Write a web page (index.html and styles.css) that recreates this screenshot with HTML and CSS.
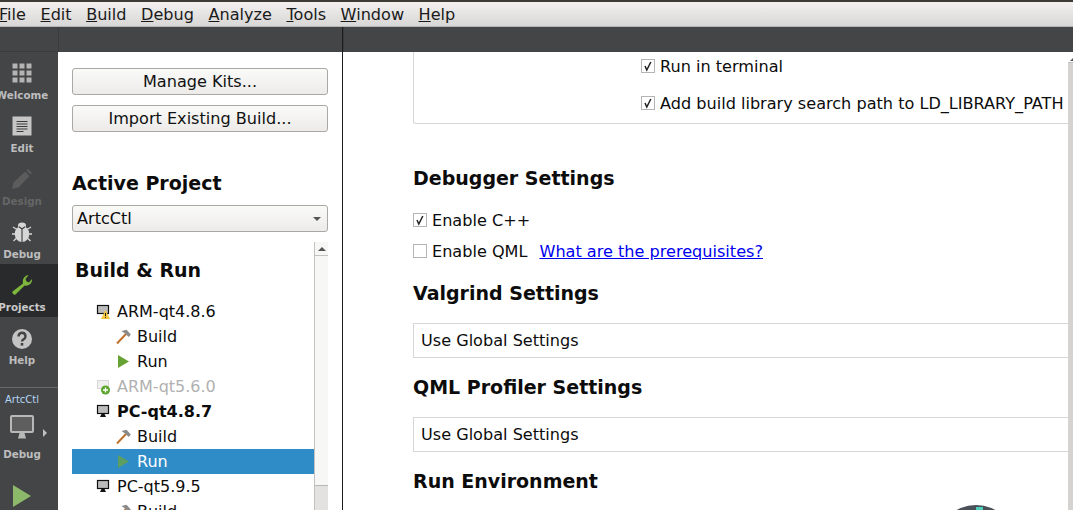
FILE: index.html
```html
<!DOCTYPE html>
<html lang="en">
<head>
<meta charset="utf-8">
<title>Qt Creator</title>
<link rel="stylesheet" href="styles.css">
</head>
<body>
<div class="app">
  <div class="titlestrip"></div>
  <nav class="menubar">
    <span class="menu file"><u>F</u>ile</span>
    <span class="menu"><u>E</u>dit</span>
    <span class="menu"><u>B</u>uild</span>
    <span class="menu"><u>D</u>ebug</span>
    <span class="menu"><u>A</u>nalyze</span>
    <span class="menu"><u>T</u>ools</span>
    <span class="menu"><u>W</u>indow</span>
    <span class="menu"><u>H</u>elp</span>
  </nav>
  <div class="main">
    <aside class="rail">
      <div class="rail-top"></div>
      <div class="mode">
        <svg class="mode-icon" width="20" height="20" viewBox="0 0 20 20"><g fill="#b4b4b4"><rect x="0.500" y="0.500" width="5" height="5"/><rect x="7.500" y="0.500" width="5" height="5"/><rect x="14.500" y="0.500" width="5" height="5"/><rect x="0.500" y="7.500" width="5" height="5"/><rect x="7.500" y="7.500" width="5" height="5"/><rect x="14.500" y="7.500" width="5" height="5"/><rect x="0.500" y="14.500" width="5" height="5"/><rect x="7.500" y="14.500" width="5" height="5"/><rect x="14.500" y="14.500" width="5" height="5"/></g></svg>
        <span class="mode-label">Welcome</span>
      </div>
      <div class="mode">
        <svg class="mode-icon" width="20" height="20" viewBox="0 0 20 20"><rect x="0.500" y="0.500" width="19" height="19" fill="#c6c6c6"/><path d="M4.500 5.500h11M4.500 8h11M4.500 10.500h11M4.500 13h11M4.500 15.500h7" stroke="#3c3c3c" stroke-width="1"/></svg>
        <span class="mode-label">Edit</span>
      </div>
      <div class="mode dim">
        <svg class="mode-icon" width="20" height="20" viewBox="0 0 20 20"><path d="M0 20l1.500-6.500L13 2.500l4.500 4.500L6.500 18.500z" fill="#5c5c5c"/><path d="M14.500 1.500L16 0l4 4-1.500 1.500z" fill="#5c5c5c"/></svg>
        <span class="mode-label">Design</span>
      </div>
      <div class="mode">
        <svg class="mode-icon" width="20" height="20" viewBox="0 0 20 20"><path d="M5 7.500L1 5M3.500 12H0M4.500 16L1.500 19M15 7.500L19 5M16.500 12H20M15.500 16l3 3" stroke="#d6d6d6" stroke-width="1.300" fill="none"/><ellipse cx="10" cy="12" rx="7.300" ry="8" fill="#d6d6d6"/><ellipse cx="10" cy="3.500" rx="4" ry="3" fill="#d6d6d6"/><path d="M10 7v13M7 4.800L10 7l3-2.200" fill="none" stroke="#3c3c3c" stroke-width="1.100"/></svg>
        <span class="mode-label">Debug</span>
      </div>
      <div class="mode active">
        <svg class="mode-icon" width="20" height="20" viewBox="0 0 20 20"><path d="M0.500 16.500L11 8.500C10 4.500 12.500 0.500 16.500 0L13.500 4l1 2.500 2.500 1L20 4c.500 4.500-3.500 7.500-7.500 6.500L3.500 19.500c-1.500 1-4-1.500-3-3z" fill="#7fb63c"/></svg>
        <span class="mode-label">Projects</span>
      </div>
      <div class="mode help">
        <svg class="mode-icon" width="20" height="20" viewBox="0 0 20 20"><circle cx="10" cy="10" r="10" fill="#c4c4c4"/><path d="M6.500 7.500c0-5 7-5 7 0 0 3-3.500 2.500-3.500 5" fill="none" stroke="#444" stroke-width="2.400"/><rect x="8.700" y="14" width="2.600" height="2.600" fill="#444"/></svg>
        <span class="mode-label">Help</span>
      </div>
      <div class="kit">
        <div class="kit-name">ArtcCtl</div>
        <div class="kit-screen">
          <svg width="24" height="24" viewBox="0 0 24 24"><rect x="1" y="1" width="22" height="16" rx="1" fill="#5e5e5e" stroke="#b8b8b8" stroke-width="2"/><path d="M9.500 18h5l1.500 5.500H8z" fill="#b8b8b8"/></svg>
          <span class="kit-arrow"></span>
        </div>
        <div class="mode-label">Debug</div>
      </div>
      <svg class="run-btn" width="18" height="22" viewBox="0 0 18 22"><path d="M0 0l18 11L0 22z" fill="#8cb96a"/></svg>
    </aside>
    <section class="side">
      <div class="toolstrip"></div>
      <div class="side-body">
        <button class="btn">Manage Kits...</button>
        <button class="btn">Import Existing Build...</button>
        <h2 class="active-title">Active Project</h2>
        <div class="combo"><span>ArtcCtl</span><i class="combo-arrow"></i></div>
        <div class="tree-wrap">
          <div class="tree">
            <h2 class="tree-title">Build &amp; Run</h2>
            <div class="row kit-row">
              <svg class="ki" width="16" height="16" viewBox="0 0 16 16"><rect x="1.500" y="1.500" width="11" height="8" fill="#bcbcbc" stroke="#111" stroke-width="1.200"/><path d="M9.500 6l4.500 9H5z" fill="#f6c73d"/><rect x="9" y="9" width="1" height="3" fill="#222"/><rect x="9" y="13" width="1" height="1" fill="#222"/></svg>
              <span>ARM-qt4.8.6</span>
            </div>
            <div class="row sub-row">
              <svg class="si" width="15" height="15" viewBox="0 0 15 15"><path d="M1 14.500L10 5" stroke="#c1702a" stroke-width="2"/><path d="M5.500 2L10.500 .8 14.800 5.500 12.800 8 9 4.500z" fill="#8a8a8a"/></svg>
              <span>Build</span>
            </div>
            <div class="row sub-row">
              <svg class="si" width="15" height="15" viewBox="0 0 15 15"><path d="M2 1l11 6.500L2 14z" fill="#66a334"/></svg>
              <span>Run</span>
            </div>
            <div class="row kit-row disabled">
              <svg class="ki" width="16" height="16" viewBox="0 0 16 16"><rect x="1.500" y="1.500" width="11" height="8" fill="#f0f0f0" stroke="#d6d6d6"/><circle cx="9.500" cy="11" r="4.500" fill="#5aa52c"/><path d="M7 11h5M9.500 8.500v5" stroke="#fff" stroke-width="1.300"/></svg>
              <span>ARM-qt5.6.0</span>
            </div>
            <div class="row kit-row current">
              <svg class="ki" width="16" height="16" viewBox="0 0 16 16"><rect x="1.500" y="1.500" width="11" height="8" fill="#bcbcbc" stroke="#111" stroke-width="1.200"/><path d="M5.500 10h3l1.500 3h-6z" fill="#111"/></svg>
              <span>PC-qt4.8.7</span>
            </div>
            <div class="row sub-row">
              <svg class="si" width="15" height="15" viewBox="0 0 15 15"><path d="M1 14.500L10 5" stroke="#c1702a" stroke-width="2"/><path d="M5.500 2L10.500 .8 14.800 5.500 12.800 8 9 4.500z" fill="#8a8a8a"/></svg>
              <span>Build</span>
            </div>
            <div class="row sub-row selected">
              <svg class="si" width="15" height="15" viewBox="0 0 15 15"><path d="M2 1l11 6.500L2 14z" fill="#5c9e62"/></svg>
              <span>Run</span>
            </div>
            <div class="row kit-row">
              <svg class="ki" width="16" height="16" viewBox="0 0 16 16"><rect x="1.500" y="1.500" width="11" height="8" fill="#bcbcbc" stroke="#111" stroke-width="1.200"/><path d="M5.500 10h3l1.500 3h-6z" fill="#111"/></svg>
              <span>PC-qt5.9.5</span>
            </div>
            <div class="row sub-row">
              <svg class="si" width="15" height="15" viewBox="0 0 15 15"><path d="M1 14.500L10 5" stroke="#c1702a" stroke-width="2"/><path d="M5.500 2L10.500 .8 14.800 5.500 12.800 8 9 4.500z" fill="#8a8a8a"/></svg>
              <span>Build</span>
            </div>
          </div>
          <div class="scrollbar">
            <div class="sb-up"></div>
            <div class="sb-track"></div>
            <div class="sb-thumb"></div>
          </div>
        </div>
      </div>
    </section>
    <section class="content">
      <div class="toolstrip"></div>
      <div class="content-area">
        <div class="content-body">
          <div class="group">
            <label class="check-row first"><svg class="cb" width="14" height="14" viewBox="0 0 14 14"><rect x="0.500" y="0.500" width="13" height="13" fill="#fff" stroke="#b4b4b4"/><path d="M4 7l1.800 4L9.800 3" fill="none" stroke="#222" stroke-width="1.500"/></svg>Run in terminal</label>
            <label class="check-row"><svg class="cb" width="14" height="14" viewBox="0 0 14 14"><rect x="0.500" y="0.500" width="13" height="13" fill="#fff" stroke="#b4b4b4"/><path d="M4 7l1.800 4L9.800 3" fill="none" stroke="#222" stroke-width="1.500"/></svg>Add build library search path to LD_LIBRARY_PATH</label>
          </div>
          <h2 class="sec debugger">Debugger Settings</h2>
          <div class="plain-check cpp"><svg class="cb" width="14" height="14" viewBox="0 0 14 14"><rect x="0.500" y="0.500" width="13" height="13" fill="#fff" stroke="#b4b4b4"/><path d="M4 7l1.800 4L9.800 3" fill="none" stroke="#222" stroke-width="1.500"/></svg>Enable C++</div>
          <div class="plain-check qml"><svg class="cb" width="14" height="14" viewBox="0 0 14 14"><rect x="0.500" y="0.500" width="13" height="13" fill="#fff" stroke="#b4b4b4"/></svg>Enable QML<a class="link" href="#">What are the prerequisites?</a></div>
          <h2 class="sec valgrind">Valgrind Settings</h2>
          <div class="field">Use Global Settings</div>
          <h2 class="sec qml-prof">QML Profiler Settings</h2>
          <div class="field">Use Global Settings</div>
          <h2 class="sec env">Run Environment</h2>
          <div class="fab"></div>
        </div>
        <div class="vscroll"><div class="vs-up"></div></div>
      </div>
    </section>
  </div>
</div>
</body>
</html>
```

FILE: styles.css
```css
* { box-sizing: border-box; }
html, body { margin: 0; padding: 0; }
body { width: 1073px; height: 510px; overflow: hidden; background: #fff; font-family: "DejaVu Sans", sans-serif; color: #0c0c0c; font-size: 16.100px; }
.app { display: flex; flex-direction: column; height: 510px; overflow: hidden; }
.titlestrip { height: 2px; background: #3e3b37; flex: none; }
.menubar { height: 25px; flex: none; display: flex; align-items: center; gap: 14.500px; background: linear-gradient(#f2f1f0, #d8d7d5); border-bottom: 1px solid #b4b4b4; font-size: 16.100px; color: #1a1a1a; margin-left: -1px; }
.menu { line-height: 25px; }
.main { flex: 1; display: flex; min-height: 0; }
.rail { width: 58px; flex: none; background: #444547; display: flex; flex-direction: column; align-items: stretch; overflow: hidden; }
.rail-top { height: 25px; flex: none; border-bottom: 1px solid #3a3b3d; }
.mode { height: 53px; flex: none; display: flex; flex-direction: column; align-items: center; padding: 11px 14px 0 0; }
.mode.help { padding-top: 12px; }
.mode.help .mode-label { margin-top: 5px; }
.mode-icon { display: block; flex: none; }
.mode-label { font-size: 10.300px; font-weight: 700; color: #bdbdbd; line-height: 13px; margin-top: 6px; text-align: center; white-space: nowrap; display: block; }
.mode.dim .mode-label { color: #656565; }
.mode.active { background: #292a2c; }
.mode.active .mode-label { color: #c8c8c8; }
.kit { border-top: 1px solid #686868; margin-top: 17px; padding: 5px 14px 0 0; display: flex; flex-direction: column; align-items: center; flex: none; }
.kit-name { font-size: 10px; color: #b5d5f5; line-height: 13px; white-space: nowrap; }
.kit-screen { width: 44px; height: 24px; margin-top: 9px; display: flex; justify-content: center; position: relative; }
.kit-arrow { position: absolute; left: 43px; top: 14px; border-left: 4px solid #c0c0c0; border-top: 4px solid transparent; border-bottom: 4px solid transparent; }
.kit .mode-label { margin-top: 9px; }
.run-btn { margin: 24px 0 0 13px; flex: none; }
.side { width: 285px; flex: none; display: flex; flex-direction: column; border-right: 1px solid #1c1c1c; }
.toolstrip { height: 25px; flex: none; background: #444547; border-left: 1px solid #3a3b3d; }
.side-body { flex: 1; padding: 16px 14px 0; min-height: 0; display: flex; flex-direction: column; align-items: stretch; }
.btn { display: block; height: 27px; width: 256px; margin: 0 0 10px; padding: 0; border: 1px solid #aaa8a5; border-radius: 3px; background: linear-gradient(#fafaf9, #ecebe9); font-family: inherit; font-size: 16.100px; color: #111; flex: none; }
.active-title { margin: 29px 0 0; font-size: 19px; line-height: 24px; font-weight: 700; color: #0c0c0c; }
.combo { margin-top: 10px; height: 27px; width: 256px; border: 1px solid #aaa8a5; border-radius: 3px; background: linear-gradient(#fafaf9, #ecebe9); display: flex; align-items: center; justify-content: space-between; padding: 0 6px 0 4px; flex: none; }
.combo-arrow { border-top: 4px solid #555; border-left: 4px solid transparent; border-right: 4px solid transparent; }
.tree-wrap { margin-top: 10px; flex: 1; min-height: 0; display: flex; width: 256px; overflow: hidden; }
.tree { width: 242px; flex: none; }
.tree-title { margin: 0 0 0 3px; padding-top: 16px; font-size: 19px; line-height: 24px; font-weight: 700; height: 57px; }
.row { height: 25px; display: flex; align-items: center; font-size: 16px; color: #0c0c0c; white-space: nowrap; }
.kit-row { padding-left: 24px; gap: 5px; }
.sub-row { padding-left: 44px; gap: 6px; }
.ki, .si { flex: none; }
.disabled { color: #b1b1b1; }
.current { font-weight: 700; }
.selected { background: #308cc6; color: #fff; }
.scrollbar { width: 14px; flex: none; border-left: 1px solid #c2c2c2; position: relative; background: #f7f7f6; }
.sb-up { height: 14px; border-bottom: 1px solid #c2c2c2; background: #f7f7f6; position: relative; }
.sb-up::after { content: ""; position: absolute; left: 3px; top: 5px; border-bottom: 4px solid #555; border-left: 4px solid transparent; border-right: 4px solid transparent; }
.sb-track { position: absolute; left: 0; right: 0; top: 14px; height: 229px; }
.sb-thumb { position: absolute; left: 0; right: 0; top: 243px; bottom: 0; border-top: 1px solid #b8b8b8; background: #e3e2e0; }
.content { flex: 1; min-width: 0; display: flex; flex-direction: column; overflow: hidden; }
.content-area { flex: 1; min-height: 0; display: flex; }
.content-body { flex: 1; min-width: 0; padding-left: 70px; position: relative; overflow: hidden; }
.vscroll { width: 5px; flex: none; background: #d4d3d1; }
.vs-up { height: 11px; background: #fff; border-bottom: 1px solid #c2c2c2; position: relative; }
.vs-up::after { content: ""; position: absolute; left: 2px; top: 6px; border-bottom: 3px solid #555; border-left: 3px solid transparent; border-right: 3px solid transparent; }
.group { height: 72px; border: 1px solid #d6d6d6; border-top: none; border-right: none; border-radius: 0 0 0 3px; padding: 4px 0 0 227px; }
.check-row { display: flex; align-items: center; gap: 5px; height: 20px; white-space: nowrap; }
.check-row + .check-row { margin-top: 17px; }
.cb { flex: none; display: block; }
.sec { margin: 0; font-size: 19px; line-height: 24px; font-weight: 700; color: #0c0c0c; }
.debugger { margin-top: 42px; }
.plain-check { display: flex; align-items: center; gap: 5px; height: 20px; white-space: nowrap; }
.cpp { margin-top: 20px; }
.qml { margin-top: 11px; }
.link { color: #0000ee; text-decoration: underline; margin-left: 7px; }
.valgrind { margin-top: 20px; }
.field { margin-top: 18px; height: 35px; border: 1px solid #d6d6d6; border-right: none; padding-left: 7px; line-height: 33px; white-space: nowrap; }
.qml-prof { margin-top: 17px; }
.env { margin-top: 17px; }
.fab { position: absolute; left: 593px; top: 453px; width: 80px; height: 80px; border-radius: 50%; background: #4a5058; overflow: hidden; }
.fab::after { content: ""; position: absolute; left: 40px; top: 2px; width: 7px; height: 8px; background: #4fd0bd; }
```
